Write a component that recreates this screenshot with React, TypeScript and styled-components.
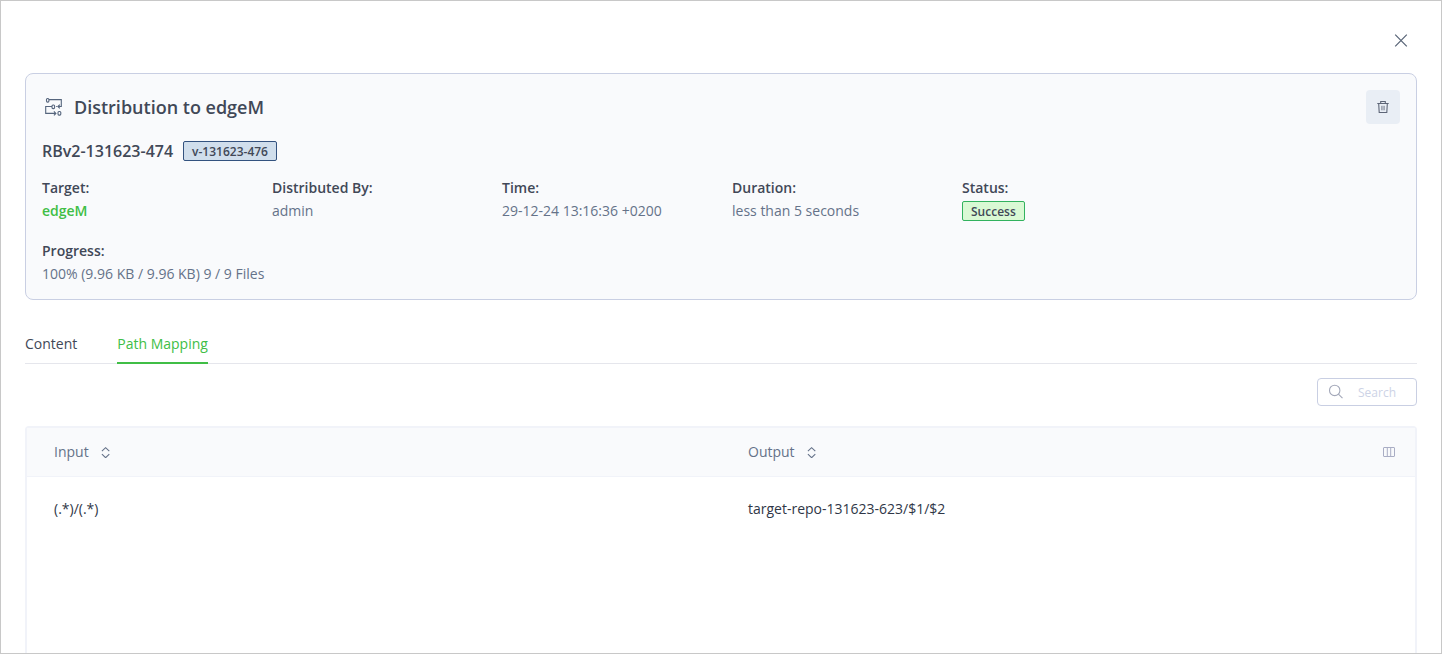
import React from 'react';
import styled, { createGlobalStyle } from 'styled-components';

const GlobalStyle = createGlobalStyle`
  *, *::before, *::after { box-sizing: border-box; }
  body { margin: 0; background: #fff; }
  body, button, input {
    font-family: 'Open Sans', 'Noto Sans', sans-serif;
    font-size: 14px;
    line-height: 20px;
  }
  button { margin: 0; padding: 0; border: 0; background: none; color: inherit; cursor: pointer; }
  svg { display: block; flex: none; }
`;

const Dialog = styled.main`
  display: flex;
  flex-direction: column;
  height: 100vh;
  padding: 0 24px;
  overflow: hidden;
  border: 1px solid #c8c8c8;
  color: #414857;
`;

const TopBar = styled.header`
  display: flex;
  flex: none;
  align-items: center;
  justify-content: flex-end;
  height: 72px;
  padding: 8px 8px 0;
`;

const CloseButton = styled.button`
  color: #556274;
`;

const Card = styled.section`
  flex: none;
  padding: 16px 16px 15px;
  border: 1px solid #c9cfe3;
  border-radius: 8px;
  background: #f9fafc;
`;

const CardHeader = styled.div`
  display: flex;
  align-items: center;
  justify-content: space-between;
  margin-bottom: 16px;
`;

const Title = styled.h1`
  display: flex;
  align-items: center;
  gap: 10px;
  margin: 0;
  padding-left: 2px;
  font-size: 18px;
  line-height: 24px;
  font-weight: 600;
`;

const DeleteButton = styled.button`
  display: flex;
  align-items: center;
  justify-content: center;
  width: 34px;
  height: 34px;
  border-radius: 4px;
  background: #e9eef5;
  color: #5d6577;
`;

const Bundle = styled.div`
  display: flex;
  align-items: center;
  gap: 10px;
  margin-bottom: 16px;
`;

const BundleName = styled.h2`
  margin: 0;
  font-size: 16px;
  line-height: 22px;
  font-weight: 600;
`;

const Tag = styled.span<{ $tone: 'info' | 'success' }>`
  display: inline-block;
  height: 20px;
  padding: 0 8px;
  border: 1px solid ${({ $tone }) => ($tone === 'info' ? '#33527f' : '#32b25e')};
  border-radius: 2px;
  background: ${({ $tone }) => ($tone === 'info' ? '#d0deec' : '#d9f9d4')};
  color: #414857;
  font-size: 12px;
  line-height: 19px;
  font-weight: 600;
`;

const Fields = styled.dl`
  display: grid;
  grid-template-columns: repeat(auto-fill, 230px);
  row-gap: 20px;
  margin: 0;

  > :last-child { grid-column: 1 / -1; }
`;

const FieldBox = styled.div`
  display: flex;
  flex-direction: column;
  align-items: flex-start;
  gap: 3px;
`;

const FieldLabel = styled.dt`
  font-weight: 600;
`;

const FieldValue = styled.dd`
  display: flex;
  margin: 0;
  color: #657289;
`;

const TargetLink = styled.a`
  color: #40be46;
  font-weight: 600;
  text-decoration: none;
`;

const Tabs = styled.div`
  display: flex;
  flex: none;
  gap: 40px;
  margin-top: 34px;
  box-shadow: inset 0 -1px #e5e6ec;
`;

const Tab = styled.button<{ $active?: boolean }>`
  height: 30px;
  padding-bottom: 8px;
  border-bottom: 2px solid ${({ $active }) => ($active ? '#40be46' : 'transparent')};
  color: ${({ $active }) => ($active ? '#40be46' : '#414857')};
`;

const Toolbar = styled.div`
  display: flex;
  flex: none;
  justify-content: flex-end;
  padding: 14px 0 20px;
`;

const SearchBox = styled.label`
  display: flex;
  align-items: center;
  gap: 14px;
  width: 100px;
  height: 28px;
  padding: 0 10px;
  border: 1px solid #c9cfe3;
  border-radius: 4px;
  color: #a3a8b9;
`;

const SearchInput = styled.input`
  flex: 1;
  min-width: 0;
  padding: 2px 0 0;
  border: 0;
  outline: 0;
  background: none;
  color: #414857;
  font-size: 12px;

  &::placeholder { color: #cdd3e6; opacity: 1; }
`;

const TableFrame = styled.div`
  flex: 1;
  border: 2px solid #f1f3f9;
  border-bottom: 0;
  border-radius: 4px 4px 0 0;
`;

const Table = styled.table`
  width: 100%;
  table-layout: fixed;
  border-collapse: separate;
  border-spacing: 0;
`;

const HeadCell = styled.th`
  height: 49px;
  padding: 0 20px 0 27px;
  border-bottom: 1px solid #f1f3f9;
  background: #f9fafc;
  color: #657289;
  font-weight: 400;
  text-align: left;
`;

const HeadContent = styled.div`
  display: flex;
  align-items: center;
  justify-content: space-between;
`;

const SortButton = styled.button`
  display: flex;
  align-items: center;
  gap: 12px;
`;

const ColumnsButton = styled.button`
  color: #a9adc4;
`;

const Cell = styled.td`
  height: 64px;
  padding: 0 27px;
  color: #2f3747;
  font-weight: 500;
`;

const CloseIcon = () => (
  <svg width="16" height="16" viewBox="0 0 16 16" fill="none" stroke="currentColor" strokeWidth="1.2">
    <path d="M2.2 1.7l11.6 11.6M13.8 1.7L2.2 13.3" />
  </svg>
);

const DistributionIcon = () => (
  <svg width="20" height="20" viewBox="0 0 20 20" fill="none" stroke="#56657d" strokeWidth="1.1">
    <rect x="2.5" y="1.5" width="2.4" height="3.6" rx="1" />
    <path d="M5 2.6h12.3v6.9h-3M15.8 7.6l-1.9 1.9 1.9 1.9" />
    <rect x="8" y="8" width="2.6" height="3.6" rx="1" />
    <path d="M12.2 9.5h1M8 9.5H1.7v6.9h10M9.9 14.4l2 2-2 2" />
    <rect x="14" y="14.5" width="2.8" height="3.6" rx="1" />
  </svg>
);

const TrashIcon = () => (
  <svg width="14" height="14" viewBox="0 0 14 14" fill="none" stroke="currentColor">
    <path d="M1.3 3.5h11.4M4.7 3.3V1.5h4.6v1.8M2.7 3.7l.5 8.8h7.6l.5-8.8" strokeWidth="1.1" />
    <path d="M5.7 5.8v4.5M8.3 5.8v4.5M7 5.8v4.5" strokeWidth="0.9" opacity="0.7" />
  </svg>
);

const SearchIcon = () => (
  <svg width="16" height="16" viewBox="0 0 16 16" fill="none" stroke="currentColor" strokeWidth="1.1">
    <circle cx="6.7" cy="6.4" r="5.2" />
    <path d="M10.4 10.1l4.1 4.1" />
  </svg>
);

const SortIcon = () => (
  <svg width="10" height="12" viewBox="0 0 10 12" fill="none" stroke="#657289" strokeWidth="1.1">
    <path d="M0.9 5.2L4.6 1.7l3.7 3.5M0.9 8.2l3.7 3.5 3.7-3.5" />
  </svg>
);

const ColumnsIcon = () => (
  <svg width="12" height="10" viewBox="0 0 12 10" fill="none" stroke="currentColor">
    <rect x="0.5" y="0.5" width="11" height="9" rx="0.5" />
    <path d="M4.3 1v8M7.7 1v8" />
  </svg>
);

const Field = ({ label, children }: { label: string; children: React.ReactNode }) => (
  <FieldBox>
    <FieldLabel>{label}</FieldLabel>
    <FieldValue>{children}</FieldValue>
  </FieldBox>
);

const mappings = [{ input: '(.*)/(.*)', output: 'target-repo-131623-623/$1/$2' }];

export default function App() {
  return (
    <>
      <GlobalStyle />
      <Dialog>
        <TopBar>
          <CloseButton type="button" aria-label="Close"><CloseIcon /></CloseButton>
        </TopBar>
        <Card>
          <CardHeader>
            <Title><DistributionIcon />Distribution to edgeM</Title>
            <DeleteButton type="button" aria-label="Delete"><TrashIcon /></DeleteButton>
          </CardHeader>
          <Bundle>
            <BundleName>RBv2-131623-474</BundleName>
            <Tag $tone="info">v-131623-476</Tag>
          </Bundle>
          <Fields>
            <Field label="Target:"><TargetLink href="#edgeM">edgeM</TargetLink></Field>
            <Field label="Distributed By:">admin</Field>
            <Field label="Time:">29-12-24 13:16:36 +0200</Field>
            <Field label="Duration:">less than 5 seconds</Field>
            <Field label="Status:"><Tag $tone="success">Success</Tag></Field>
            <Field label="Progress:">100% (9.96 KB / 9.96 KB) 9 / 9 Files</Field>
          </Fields>
        </Card>
        <Tabs role="tablist">
          <Tab type="button" role="tab" aria-selected={false}>Content</Tab>
          <Tab type="button" role="tab" aria-selected $active>Path Mapping</Tab>
        </Tabs>
        <Toolbar>
          <SearchBox>
            <SearchIcon />
            <SearchInput type="text" placeholder="Search" aria-label="Search" />
          </SearchBox>
        </Toolbar>
        <TableFrame>
          <Table>
            <thead>
              <tr>
                <HeadCell scope="col">
                  <SortButton type="button">Input<SortIcon /></SortButton>
                </HeadCell>
                <HeadCell scope="col">
                  <HeadContent>
                    <SortButton type="button">Output<SortIcon /></SortButton>
                    <ColumnsButton type="button" aria-label="Choose columns"><ColumnsIcon /></ColumnsButton>
                  </HeadContent>
                </HeadCell>
              </tr>
            </thead>
            <tbody>
              {mappings.map((row) => (
                <tr key={row.input}>
                  <Cell>{row.input}</Cell>
                  <Cell>{row.output}</Cell>
                </tr>
              ))}
            </tbody>
          </Table>
        </TableFrame>
      </Dialog>
    </>
  );
}
